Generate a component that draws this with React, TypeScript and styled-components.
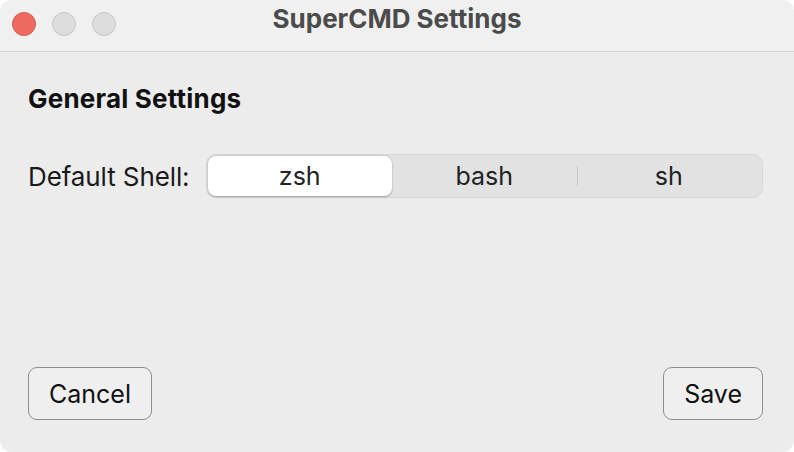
import React, { useState } from 'react';
import styled, { createGlobalStyle } from 'styled-components';

const GlobalStyle = createGlobalStyle`
  html, body {
    margin: 0;
    padding: 0;
    background: #ffffff;
  }
  body {
    font-family: Inter, "Noto Sans", "Liberation Sans", sans-serif;
  }
`;

const shells = ['zsh', 'bash', 'sh'];

const App = (): JSX.Element => {
  const [shell, setShell] = useState<string>('zsh');

  return (
    <>
      <GlobalStyle />
      <Window>
        <TitleBar>
          <Lights>
            <Light color="#ee6a5f" edge="#d55a50" />
            <Light color="#dcdcdc" edge="#c4c4c4" />
            <Light color="#dcdcdc" edge="#c4c4c4" />
          </Lights>
          <Title>SuperCMD Settings</Title>
        </TitleBar>

        <Content>
          <Heading>General Settings</Heading>

          <Row>
            <Label>Default Shell:</Label>
            <Segmented>
              {shells.map((s, i) => (
                <Segment
                  key={s}
                  active={shell === s}
                  divider={i > 0 && shell !== s && shell !== shells[i - 1]}
                  onClick={() => setShell(s)}
                >
                  {s}
                </Segment>
              ))}
            </Segmented>
          </Row>

          <Footer>
            <Button>Cancel</Button>
            <Button>Save</Button>
          </Footer>
        </Content>
      </Window>
    </>
  );
};

export default App;

const Window = styled.div`
  width: 794px;
  height: 452px;
  box-sizing: border-box;
  display: flex;
  flex-direction: column;
  background: #ececec;
  border-radius: 12px;
  overflow: hidden;
`;

const TitleBar = styled.div`
  position: relative;
  height: 52px;
  flex-shrink: 0;
  box-sizing: border-box;
  padding-top: 3px;
  display: flex;
  align-items: flex-start;
  justify-content: center;
  background: #f0f0f0;
  border-bottom: 1px solid #d4d4d4;
`;

const Lights = styled.div`
  position: absolute;
  left: 12px;
  top: 12px;
  display: flex;
  gap: 16px;
`;

const Light = styled.span<{ color: string; edge: string }>`
  width: 24px;
  height: 24px;
  box-sizing: border-box;
  border-radius: 50%;
  background: ${(p) => p.color};
  border: 1px solid ${(p) => p.edge};
`;

const Title = styled.div`
  font-size: 26px;
  line-height: 32px;
  font-weight: 700;
  color: #4b4b4b;
`;

const Content = styled.div`
  flex: 1;
  display: flex;
  flex-direction: column;
  padding: 31px 31px 32px 28px;
`;

const Heading = styled.div`
  font-size: 26px;
  font-weight: 700;
  color: #111;
  line-height: 32px;
  letter-spacing: 0.2px;
`;

const Row = styled.div`
  display: flex;
  align-items: center;
  gap: 16px;
  margin-top: 39px;
`;

const Label = styled.div`
  font-size: 26px;
  color: #1a1a1a;
  letter-spacing: -0.1px;
`;

const Segmented = styled.div`
  flex: 1;
  display: flex;
  height: 44px;
  box-sizing: border-box;
  padding: 1px;
  background: #e2e2e2;
  border: 1px solid #d8d8d8;
  border-radius: 10px;
`;

const Segment = styled.div<{ active: boolean; divider: boolean }>`
  position: relative;
  flex: 1;
  display: flex;
  align-items: center;
  justify-content: center;
  font-size: 25px;
  color: #222;
  border-radius: 8px;
  cursor: pointer;
  background: ${(p) => (p.active ? '#ffffff' : 'transparent')};
  box-shadow: ${(p) => (p.active ? '0 0.5px 2px rgba(0,0,0,0.3)' : 'none')};

  &::before {
    content: '';
    display: ${(p) => (p.divider ? 'block' : 'none')};
    position: absolute;
    left: 0;
    top: 10px;
    bottom: 10px;
    width: 1px;
    background: #c8c8c8;
  }
`;

const Footer = styled.div`
  margin-top: auto;
  display: flex;
  justify-content: space-between;
`;

const Button = styled.button`
  height: 53px;
  padding: 0 20px;
  box-sizing: border-box;
  font-family: Inter, "Noto Sans", "Liberation Sans", sans-serif;
  font-size: 25px;
  color: #111;
  background: #efefef;
  border: 1.5px solid #8e8e8e;
  border-radius: 9px;
  cursor: pointer;
`;
